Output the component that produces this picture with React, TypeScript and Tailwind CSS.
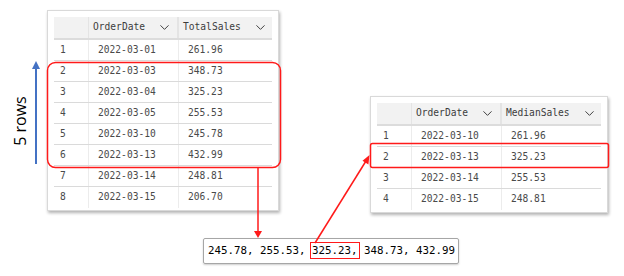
import React from 'react';
import { ChevronDown } from 'lucide-react';

type Row = [string, string, string];

const mono = { fontFamily: '"DejaVu Sans Mono", "Liberation Mono", monospace' };

const DataTable: React.FC<{ cols: [string, string]; rows: Row[]; lastCol: string }> = ({ cols, rows, lastCol }) => {
  return (
    <div className="bg-white border border-[#d9d9d9] shadow-[1px_2px_3px_rgba(0,0,0,0.3)] px-[6px] pt-[6px] pb-[2px]">
      <div
        className="flex h-[23px] bg-[#f2f2f2] border-b-2 border-[#dcdcdc] text-[9.6px] text-[#3c3c3c]"
        style={mono}
      >
        <div className="w-[35px] border-r border-[#e4e4e4]" />
        <div className="w-[90px] flex items-center justify-between pl-[4px] pr-[5px] border-r-2 border-[#e4e4e4]">
          <span>{cols[0]}</span>
          <ChevronDown size={15} strokeWidth={1.5} className="text-[#333]" />
        </div>
        <div className={`${lastCol} flex items-center justify-between pl-[4px] pr-[4px]`}>
          <span>{cols[1]}</span>
          <ChevronDown size={15} strokeWidth={1.5} className="text-[#333]" />
        </div>
      </div>
      {rows.map((r, i) => (
        <div
          key={i}
          className={`flex h-[21px] items-center text-[9.6px] text-[#4a4a4a] ${i < rows.length - 1 ? 'border-b border-[#dadada]' : ''}`}
          style={mono}
        >
          <div className="w-[35px] h-full flex items-center pl-[6px] border-r border-[#ececec]">{r[0]}</div>
          <div className="w-[90px] h-full flex items-center pl-[9px] border-r border-[#ececec]">{r[1]}</div>
          <div className={`${lastCol} h-full flex items-center pl-[9px]`}>{r[2]}</div>
        </div>
      ))}
    </div>
  );
};

const totals: Row[] = [
  ['1', '2022-03-01', '261.96'],
  ['2', '2022-03-03', '348.73'],
  ['3', '2022-03-04', '325.23'],
  ['4', '2022-03-05', '255.53'],
  ['5', '2022-03-10', '245.78'],
  ['6', '2022-03-13', '432.99'],
  ['7', '2022-03-14', '248.81'],
  ['8', '2022-03-15', '206.70'],
];

const medians: Row[] = [
  ['1', '2022-03-10', '261.96'],
  ['2', '2022-03-13', '325.23'],
  ['3', '2022-03-14', '255.53'],
  ['4', '2022-03-15', '248.81'],
];

export default function App() {
  return (
    <div className="relative w-[624px] h-[276px] bg-white overflow-hidden">
      <div className="flex items-start">
        <div className="ml-[47px] mt-[10px] w-[232px]">
          <DataTable cols={['OrderDate', 'TotalSales']} rows={totals} lastCol="w-[93px]" />
        </div>
        <div className="ml-[91px] mt-[96px] w-[238px]">
          <DataTable cols={['OrderDate', 'MedianSales']} rows={medians} lastCol="w-[99px]" />
        </div>
      </div>

      <div className="ml-[203px] mt-[25px] w-[256px] h-[26px] flex items-center pl-[4px] border border-[#a6a6a6] rounded-[2px] shadow-[0_1px_2px_rgba(0,0,0,0.2)]">
        <span className="text-[10.8px] text-black whitespace-pre" style={mono}>
          {'245.78, 255.53, '}
          <span className="outline outline-[1.5px] outline-[#ff1a1a] outline-offset-[1px]">325.23,</span>
          {' 348.73, 432.99'}
        </span>
      </div>

      {/* side label */}
      <div
        className="absolute left-[-15px] top-[113px] w-[70px] h-[16px] -rotate-90 text-center whitespace-nowrap text-[16px] text-black leading-none"
        style={{ fontFamily: '"Open Sans", "Noto Sans", sans-serif' }}
      >
        5 rows
      </div>

      {/* annotations */}
      <svg className="absolute inset-0 pointer-events-none" width="624" height="276">
        <line x1="36" y1="164" x2="36" y2="68" stroke="#4472c4" strokeWidth="2" />
        <polygon points="32,69 40,69 36,61" fill="#4472c4" />

        <rect x="47.5" y="62.5" width="233" height="105" rx="8" fill="none" stroke="#ff1a1a" strokeWidth="1.5" />
        <line x1="258" y1="168" x2="258" y2="232" stroke="#ff1a1a" strokeWidth="1.5" />
        <polygon points="254,231 262,231 258,238" fill="#ff1a1a" />

        <line x1="315" y1="243" x2="366" y2="161" stroke="#ff1a1a" strokeWidth="1.5" />
        <polygon points="369.5,155 368.4,164.4 362.5,160.8" fill="#ff1a1a" />

        <rect x="370.5" y="143.5" width="238" height="24" rx="2" fill="none" stroke="#ff1a1a" strokeWidth="1.5" />
      </svg>
    </div>
  );
}
